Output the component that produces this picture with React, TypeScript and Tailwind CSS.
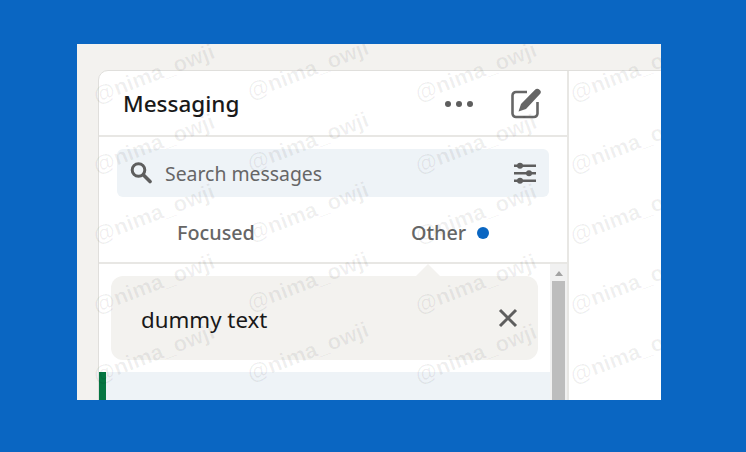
import React from 'react';

const marks = [
  [99, 107], [253, 103], [421, 105], [576, 105],
  [99, 177], [253, 175], [421, 177], [576, 177],
  [99, 247], [253, 245], [421, 247], [576, 247],
  [99, 317], [253, 315], [421, 317], [576, 317],
  [99, 387], [253, 385], [421, 387], [576, 387],
];

function Watermarks() {
  return (
    <div className="absolute inset-0 overflow-hidden pointer-events-none">
      {marks.map(([x, y], i) => (
        <span
          key={i}
          className="absolute origin-bottom-left -rotate-[21deg] whitespace-nowrap font-['Liberation_Sans',sans-serif] text-[22px] leading-[26px] font-bold text-[#00000010]"
          style={{ left: x - 77, top: y - 44 - 24 }}
        >
          @nima_owji
        </span>
      ))}
    </div>
  );
}

function ComposeIcon() {
  return (
    <svg width="32" height="32" viewBox="0 0 32 32" fill="none">
      <path d="M17 5H6A3.500 3.500 0 0 0 2.500 8.500V26.500A3.500 3.500 0 0 0 6 30H24A3.500 3.500 0 0 0 27.500 26.500V15" stroke="#666" strokeWidth="2.600" />
      <path d="M8.500 24.500l2.500-7.500L25 2.700a3 3 0 0 1 4.500 0 3 3 0 0 1 0.500 4.300L16 22z" fill="#666" />
    </svg>
  );
}

function SlidersIcon() {
  return (
    <svg width="22" height="22" viewBox="0 0 22 22" fill="#5e5e5e">
      <rect x="0" y="2.500" width="22" height="2.500" />
      <rect x="0" y="10" width="22" height="2.500" />
      <rect x="0" y="17.500" width="22" height="2.500" />
      <circle cx="6" cy="3.700" r="3" />
      <circle cx="15" cy="11.200" r="3" />
      <circle cx="6" cy="18.700" r="3" />
    </svg>
  );
}

function SearchIcon() {
  return (
    <svg width="22" height="22" viewBox="0 0 22 22" fill="none" stroke="#5e5e5e">
      <circle cx="8.500" cy="8" r="6.300" strokeWidth="3" />
      <path d="M13.500 13L20 19.500" strokeWidth="3.600" strokeLinecap="round" />
    </svg>
  );
}

export default function App() {
  return (
    <div className="h-[452px] w-[746px] overflow-hidden bg-[#0a66c2] pl-[77px] pt-[44px] font-['Noto_Sans','Open_Sans',sans-serif]">
      <div className="relative h-[356px] w-[584px] overflow-hidden bg-[#f3f2ef] pl-[21px] pt-[26px]">
        <div className="flex h-[340px] w-[600px] overflow-hidden rounded-tl-[10px] border border-[#e0dfdc] bg-white">
          {/* Список сообщений */}
          <div className="flex w-[470px] shrink-0 flex-col border-r-2 border-[#e8e7e4]">
            <div className="flex h-[66px] shrink-0 items-center justify-between border-b-2 border-[#e8e7e4] pl-6 pr-[25px]">
              <h1 className="pt-[2px] text-[22.500px] leading-none font-medium text-[#191919]">Messaging</h1>
              <div className="flex items-center gap-[37px]">
                <div className="flex gap-[5px] pt-[1px]">
                  <span className="h-[6px] w-[6px] rounded-full bg-[#5e5e5e]" />
                  <span className="h-[6px] w-[6px] rounded-full bg-[#5e5e5e]" />
                  <span className="h-[6px] w-[6px] rounded-full bg-[#5e5e5e]" />
                </div>
                <ComposeIcon />
              </div>
            </div>

            <div className="shrink-0 px-[18px] pt-[12px]">
              <div className="flex h-[48px] items-center rounded-[6px] bg-[#eef3f7] pl-[13px] pr-[13px]">
                <SearchIcon />
                <span className="ml-[13px] flex-1 pt-[1px] text-[19.400px] text-[#666]">Search messages</span>
                <SlidersIcon />
              </div>
            </div>

            <div className="flex h-[67px] shrink-0 items-center border-b-2 border-[#e8e7e4] pl-[78px] pt-[7px] text-[19.800px] font-medium text-[#666]">
              <span>Focused</span>
              <span className="ml-[156px]">Other</span>
              <span className="ml-[11px] h-3 w-3 rounded-full bg-[#0a66c2]" />
            </div>

            <div className="flex min-h-0 flex-1">
              <div className="min-w-0 flex-1 pt-[12px]">
                <div className="relative mx-[12px] flex h-[84px] w-[427px] items-center justify-between rounded-[12px] bg-[#f3f2ef] pl-[30px] pr-[18px]">
                  <span className="absolute -top-[12px] left-[305px] h-0 w-0 border-x-[12px] border-b-[12px] border-x-transparent border-b-[#f3f2ef]" />
                  <span className="pt-[3px] text-[22.300px] text-[#191919]">dummy text</span>
                  <svg width="24" height="24" viewBox="0 0 24 24" stroke="#5e5e5e" strokeWidth="3">
                    <path d="M4 4l16 16M20 4L4 20" />
                  </svg>
                </div>
                <div className="mt-[12px] h-[60px] border-l-[7px] border-[#057642] bg-[#eef3f7]" />
              </div>
              <div className="flex w-[17px] shrink-0 flex-col items-center bg-[#f1f1f1]">
                <span className="mt-[7px] h-0 w-0 border-x-[4px] border-b-[5px] border-x-transparent border-b-[#a3a3a3]" />
                <div className="mt-[5px] h-[200px] w-[13px] bg-[#bdbdbd]" />
              </div>
            </div>
          </div>
          <div className="flex-1 bg-white" />
        </div>
        <Watermarks />
      </div>
    </div>
  );
}
